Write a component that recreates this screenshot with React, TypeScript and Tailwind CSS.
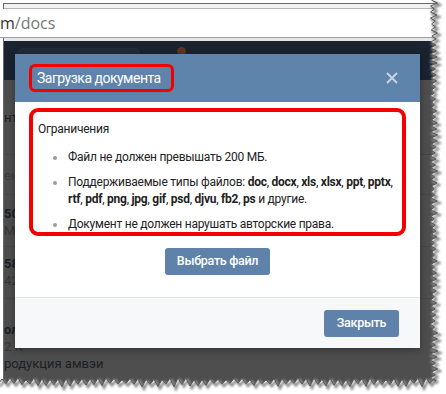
import React from "react";

const FILE_TYPES = ["doc", "docx", "xls", "xlsx", "ppt", "pptx", "rtf", "pdf", "png", "jpg", "gif", "psd", "djvu", "fb2", "ps"];

// torn paper edge along the right and bottom of the screenshot
function buildEdge() {
  let seed = 11;
  const rnd = () => {
    seed = (seed * 9301 + 49297) % 233280;
    return seed / 233280;
  };
  const edge: [number, number][] = [];
  for (let y = 0; y <= 378; y += 6) {
    edge.push([430 + rnd() * 2, y]);
    edge.push([434 + rnd() * 4, y + 3]);
  }
  for (let x = 434; x >= 0; x -= 8) {
    edge.push([x, 378 + rnd() * 2]);
    edge.push([x - 4, 383 + rnd() * 4]);
  }
  const line = edge.map(([x, y], i) => `${i ? "L" : "M"}${x.toFixed(1)} ${y.toFixed(1)}`).join(" ");
  return { line, fill: `M446 0 ${line.replace("M", "L")} L0 394 L446 394 Z` };
}

const EDGE = buildEdge();

function TornEdge() {
  return (
    <svg className="absolute inset-0 pointer-events-none" width="446" height="394" viewBox="0 0 446 394">
      <defs>
        <filter id="blur" x="-5%" y="-5%" width="110%" height="110%">
          <feGaussianBlur stdDeviation="1.2" />
        </filter>
      </defs>
      <path d={EDGE.fill} fill="#ffffff" />
      <path d={EDGE.line} transform="translate(2 2)" fill="none" stroke="#8a8a8a" strokeWidth="2.5" filter="url(#blur)" />
      <path d={EDGE.line} fill="none" stroke="#5a5a5a" strokeWidth="1" />
    </svg>
  );
}

function Dimmed() {
  return (
    <div className="flex-1 bg-[#4e4e4e] text-[13px] leading-[17px] text-[#1b1f26] font-['Roboto',sans-serif] pt-[29px]">
      <div className="h-[46px] border-b border-[#474747]">нт</div>
      <div className="h-[40px] pt-[12px] text-[#3a3d42] border-b border-[#474747]">ек</div>
      <div className="h-[52px] pt-[10px] border-b border-[#474747]">
        <div className="font-bold">50</div>
        <div className="text-[#33363a]">МІ</div>
      </div>
      <div className="h-[52px] pt-[8px] border-b border-[#474747]">
        <div className="font-bold">58</div>
        <div className="text-[#33363a]">42</div>
      </div>
      <div className="pt-[22px]">
        <div className="font-bold">ол</div>
        <div className="text-[#33363a]">2 К</div>
        <div>родукция амвэи</div>
      </div>
    </div>
  );
}

function Bullet() {
  return <span className="w-[4px] h-[4px] rounded-full bg-[#8d9db2] mt-[7px] mr-[11px] shrink-0" />;
}

function Modal() {
  return (
    <div className="absolute left-[15px] top-[54px] w-[405px] bg-white shadow-[0_2px_8px_rgba(0,0,0,0.35)] font-['Roboto',sans-serif]">
      <div className="h-[48px] bg-[#5f84ab] flex items-center justify-between pl-[14px] pr-[22px]">
        <div className="border-[3.5px] border-[#f50000] rounded-[6px] h-[28px] flex items-center pl-[5px] pr-[10px] text-white text-[14px] tracking-[-0.5px]">
          Загрузка документа
        </div>
        <svg width="12" height="12" viewBox="0 0 12 12">
          <path d="M1 1 L11 11 M11 1 L1 11" stroke="#c9d6e5" strokeWidth="1.8" />
        </svg>
      </div>
      <div className="h-[195px] pt-[6px] px-[14px] flex flex-col">
        <div className="h-[128px] border-[4px] border-[#f50000] rounded-[9px] pl-[5px] pt-[9px] text-[12px] tracking-[-0.25px] text-[#222]">
          <div className="leading-[17px]">Ограничения</div>
          <ul className="mt-[11px] pl-[15px] flex flex-col gap-[8px] leading-[17px]">
            <li className="flex">
              <Bullet />
              <span>Файл не должен превышать 200 МБ.</span>
            </li>
            <li className="flex">
              <Bullet />
              <span>
                Поддерживаемые типы файлов:{" "}
                {FILE_TYPES.map((t, i) => (
                  <React.Fragment key={t}>
                    <b>{t}</b>
                    {i < FILE_TYPES.length - 1 ? ", " : ""}
                  </React.Fragment>
                ))}{" "}
                и другие.
              </span>
            </li>
            <li className="flex">
              <Bullet />
              <span>Документ не должен нарушать авторские права.</span>
            </li>
          </ul>
        </div>
        <div className="flex justify-center mt-[12px]">
          <button className="w-[105px] h-[27px] rounded-[3px] bg-[#5e82a9] text-white text-[12.5px] tracking-[-0.3px] font-medium">
            Выбрать файл
          </button>
        </div>
      </div>
      <div className="h-[51px] bg-[#f7f8fa] border-t border-[#e5e7ea] flex items-center justify-end pr-[21px]">
        <button className="w-[75px] h-[27px] rounded-[3px] bg-[#5e82a9] text-white text-[12.5px] tracking-[-0.3px] font-medium">
          Закрыть
        </button>
      </div>
    </div>
  );
}

export default function App() {
  return (
    <div className="relative w-[446px] h-[394px] bg-white overflow-hidden">
      <div className="absolute left-[3px] top-[3px] w-[440px] h-[386px] border-l border-t border-[#6a6a6a] flex flex-col">
        <div className="h-[5px] bg-[#f2f2f2] border-b border-[#b5b5b5]" />
        <div className="h-[29px] bg-white border-b border-[#9e9e9e] flex items-center font-['Open_Sans',sans-serif] text-[16px] -ml-[4px]">
          <span className="text-[#333]">m</span>
          <span className="text-[#777]">/docs</span>
        </div>
        <div className="h-[3px] bg-[#e6e6e6]" />
        <div className="h-[39px] bg-[#1b2230] relative">
          <div className="absolute left-[12px] top-[7px] w-[125px] h-[13px] rounded-[7px] bg-[#232a38]" />
          <div className="absolute left-[173px] top-[6px] w-[9px] h-[9px] rounded-full bg-[#5a3524]" />
        </div>
        <Dimmed />
      </div>
      <Modal />
      <TornEdge />
    </div>
  );
}
